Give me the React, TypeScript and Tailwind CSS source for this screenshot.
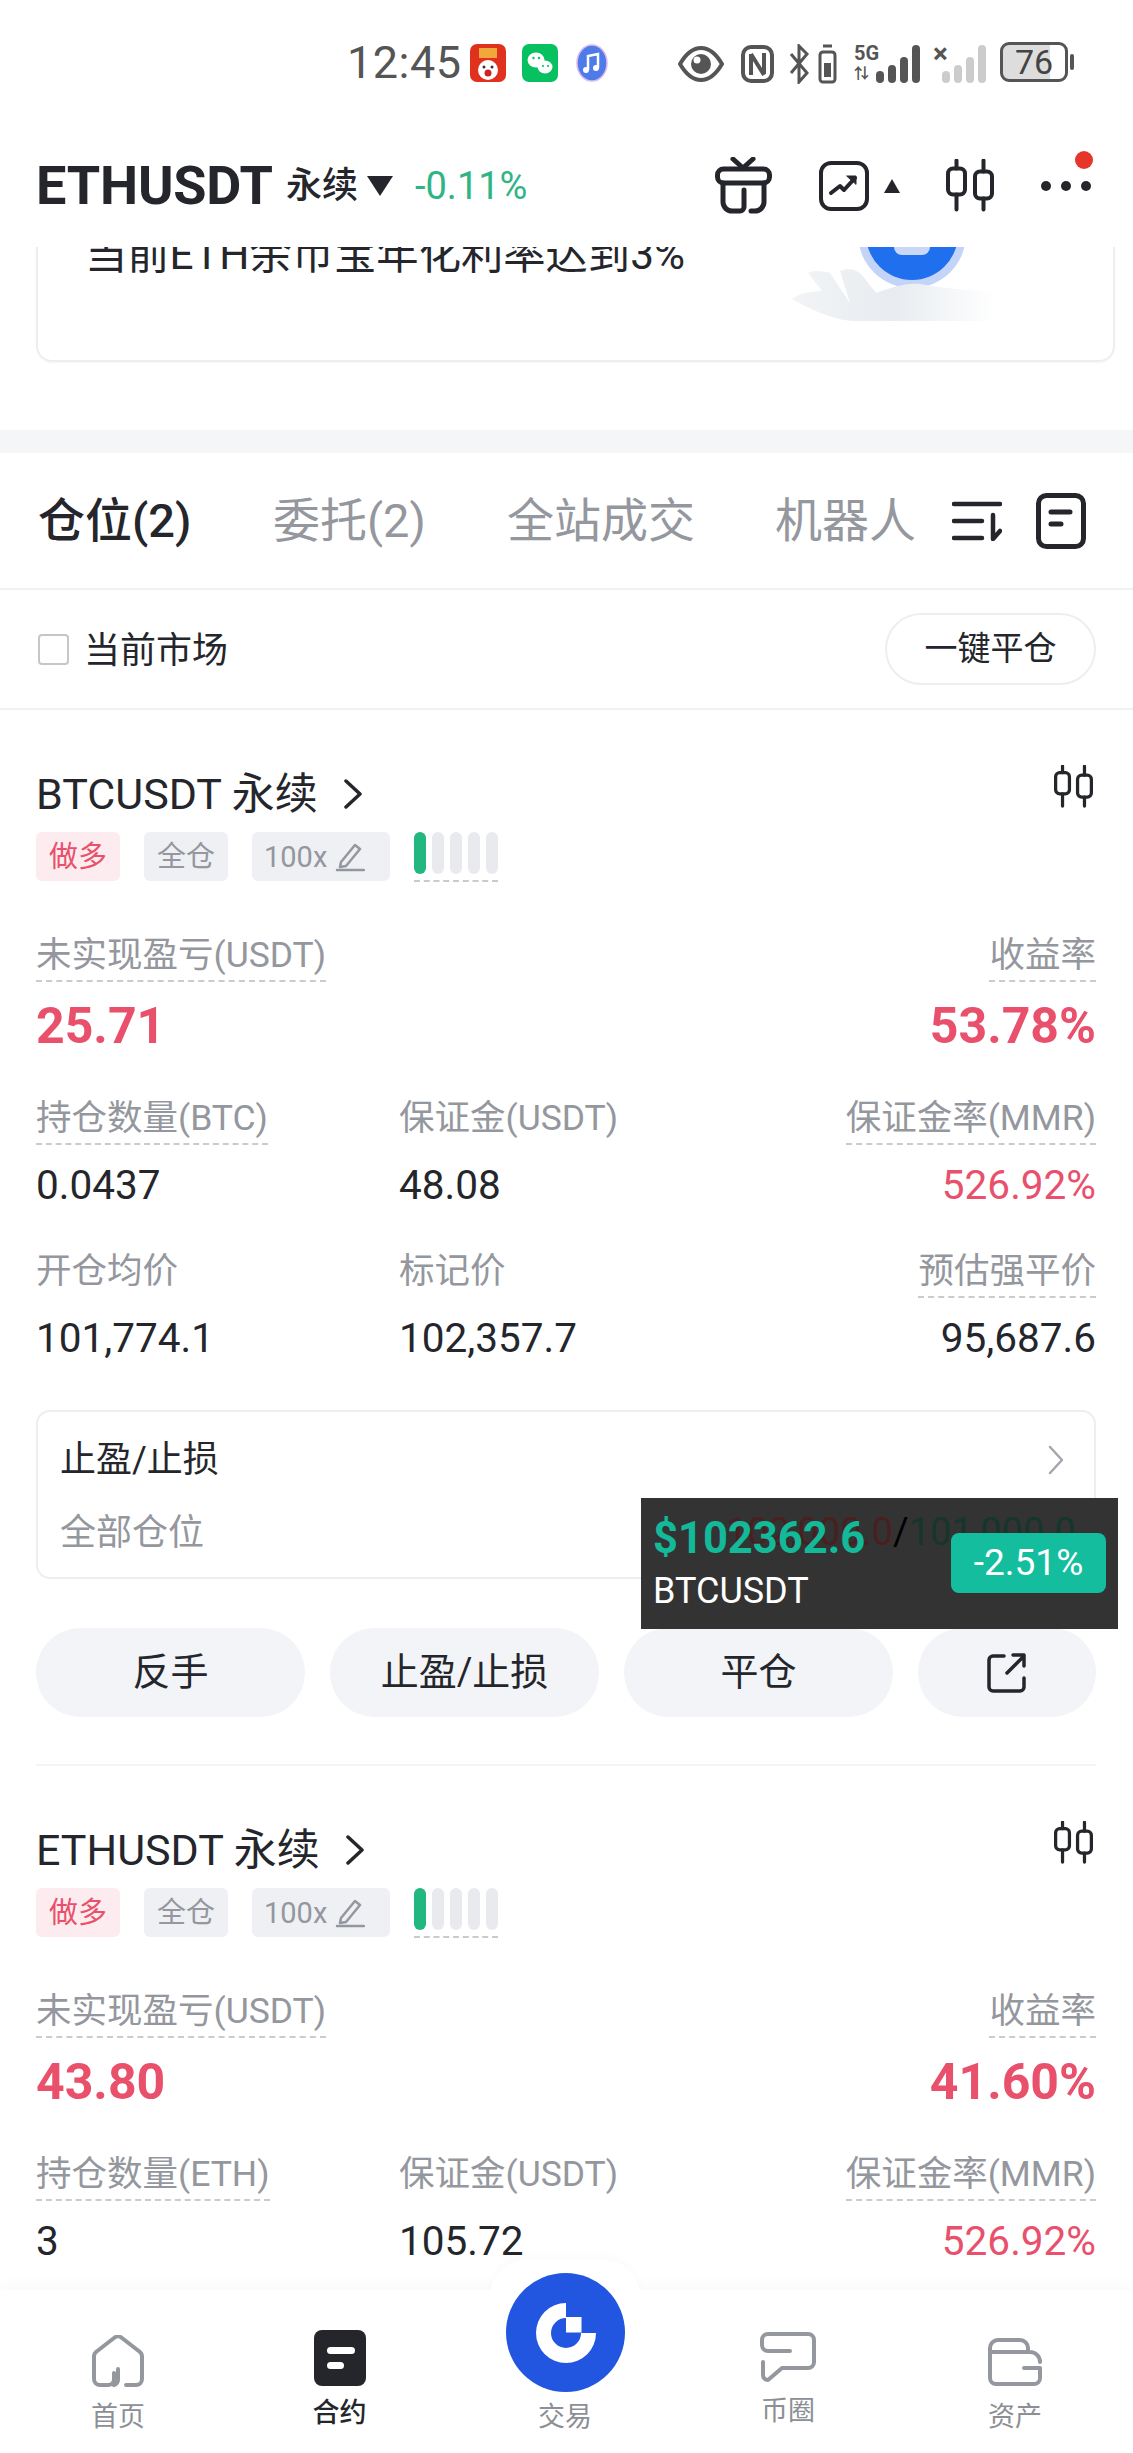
import React from 'react';

const FONT = "font-['Roboto','Noto_Sans_CJK_SC',sans-serif]";
const INK = '#24262c';

function CandleIcon({ className }: { className: string }) {
  return (
    <svg viewBox="0 0 48 52" fill="none" stroke={INK} strokeWidth="4" strokeLinecap="round" className={className}>
      <rect x="2" y="9" width="17" height="26" rx="5" />
      <rect x="29" y="12" width="17" height="27" rx="5" />
      <path d="M10.5 1v8M10.5 35v15M37.5 1v11M37.5 39v11" />
    </svg>
  );
}

function StatusBar() {
  return (
    <div className="h-[124px] flex items-start pt-[42px] pl-[347px] shrink-0 text-[#555]">
      <span className="text-[45px] leading-[42px] w-[123px] tracking-[0.5px] font-['Roboto']">12:45</span>
      <div className="w-[36px] h-[38px] rounded-[7px] bg-[#e0301e] flex items-center justify-center mt-[2px]">
        <svg viewBox="0 0 36 38" className="w-[36px] h-[38px]">
          <path d="M9 4h18v10H9z" fill="#f6c544" opacity="0.8" />
          <circle cx="18" cy="26" r="10" fill="#fff" />
          <circle cx="18" cy="29" r="3.5" fill="#c22" />
          <circle cx="14" cy="23" r="1.5" fill="#333" />
          <circle cx="22" cy="23" r="1.5" fill="#333" />
        </svg>
      </div>
      <div className="ml-[16px] w-[36px] h-[38px] rounded-[7px] bg-[#07c160] flex items-center justify-center mt-[2px]">
        <svg viewBox="0 0 36 38" className="w-[36px] h-[38px]">
          <ellipse cx="14" cy="16" rx="8.5" ry="7.5" fill="#fff" />
          <ellipse cx="23" cy="23" rx="7.5" ry="6.5" fill="#fff" />
          <circle cx="11.5" cy="14" r="1.2" fill="#07c160" />
          <circle cx="17" cy="14" r="1.2" fill="#07c160" />
          <circle cx="21" cy="22" r="1.1" fill="#07c160" />
          <circle cx="26" cy="22" r="1.1" fill="#07c160" />
        </svg>
      </div>
      <svg viewBox="0 0 32 38" className="ml-[18px] w-[32px] h-[38px] mt-[2px]">
        <ellipse cx="16" cy="19" rx="15" ry="18" fill="#4f7be8" stroke="#d9b8f0" strokeWidth="1.5" />
        <path d="M12 26V12l10-2v14" fill="none" stroke="#fff" strokeWidth="2.5" />
        <circle cx="10" cy="26" r="3" fill="#fff" />
        <circle cx="20" cy="24" r="3" fill="#fff" />
      </svg>
      <svg viewBox="0 0 46 36" className="ml-[70px] w-[46px] h-[36px] mt-[4px]" fill="none">
        <path d="M2 18C9 6 16 2 23 2s14 4 21 16c-7 12-14 16-21 16S9 30 2 18z" stroke="#555" strokeWidth="4" />
        <circle cx="23" cy="18" r="10" fill="#555" />
        <circle cx="19" cy="14" r="3.5" fill="#fff" />
      </svg>
      <svg viewBox="0 0 33 38" className="ml-[17px] w-[33px] h-[38px] mt-[3px]" fill="none" stroke="#555">
        <rect x="2" y="2" width="29" height="34" rx="8" strokeWidth="4" />
        <path d="M10 30V9M23 8v21M10 9l13 21" strokeWidth="4" />
      </svg>
      <svg viewBox="0 0 50 40" className="ml-[14px] w-[50px] h-[40px] mt-[2px]" fill="none" stroke="#555">
        <path d="M3 10l16 19-8 9V2l8 8L3 29" strokeWidth="3" />
        <rect x="32" y="8" width="15" height="30" rx="3" strokeWidth="3" />
        <path d="M35 2h9" strokeWidth="3" />
        <rect x="36" y="19" width="7" height="14" fill="#555" stroke="none" />
      </svg>
      <div className="ml-[16px] w-[22px] flex flex-col items-start text-[#555] font-bold mt-[1px]">
        <span className="text-[20px] leading-[20px] font-['Roboto']">5G</span>
        <span className="text-[15px] leading-[18px] mt-[2px]">⇅</span>
      </div>
      <div className="flex items-end gap-[4px] h-[38px] mt-[3px]">
        <span className="w-[8px] h-[12px] rounded-full bg-[#555]" />
        <span className="w-[8px] h-[18px] rounded-full bg-[#555]" />
        <span className="w-[8px] h-[26px] rounded-full bg-[#555]" />
        <span className="w-[8px] h-[38px] rounded-full bg-[#555]" />
      </div>
      <div className="ml-[13px] w-[16px] text-[#555] font-bold text-[28px] leading-[24px]">×</div>
      <div className="-ml-[7px] flex items-end gap-[4px] h-[38px] mt-[3px]">
        <span className="w-[8px] h-[12px] rounded-full bg-[#ccc]" />
        <span className="w-[8px] h-[18px] rounded-full bg-[#ccc]" />
        <span className="w-[8px] h-[26px] rounded-full bg-[#ccc]" />
        <span className="w-[8px] h-[38px] rounded-full bg-[#ccc]" />
      </div>
      <div className="ml-[14px] w-[68px] h-[40px] rounded-[9px] border-[3px] border-[#555] bg-[linear-gradient(90deg,#ddd_0,#ddd_76%,#fff_76%)] text-[#444] text-[34px] leading-[34px] text-center font-['Roboto']">
        76
      </div>
      <span className="ml-[2px] mt-[12px] w-[4px] h-[16px] rounded-full bg-[#555]" />
    </div>
  );
}

function Header() {
  return (
    <div className="h-[123px] flex items-center pl-[36px] shrink-0 relative">
      <span className="text-[54px] leading-[60px] font-bold text-[#24262c] tracking-[-0.2px] w-[238px] whitespace-nowrap">ETHUSDT</span>
      <span className="ml-[12px] text-[36px] font-medium text-[#24262c] leading-[60px]">永续</span>
      <svg viewBox="0 0 26 20" className="ml-[9px] w-[26px] h-[20px]">
        <path d="M0 0h26L13 20z" fill={INK} />
      </svg>
      <span className="ml-[22px] text-[38px] text-[#2fb585] leading-[60px] w-[115px] whitespace-nowrap">-0.11%</span>
      <svg viewBox="0 0 57 57" fill="none" stroke={INK} strokeWidth="5" strokeLinecap="round" className="ml-[185px] w-[57px] h-[57px]">
        <path d="M18 2l10 9 10-9" />
        <rect x="2.5" y="12" width="52" height="14" rx="6" />
        <path d="M8 26v19a9 9 0 0 0 9 9h8a4 4 0 0 0 4-4V33M49 26v19a9 9 0 0 1-9 9h-4" />
      </svg>
      <svg viewBox="0 0 50 50" fill="none" stroke={INK} strokeLinecap="round" strokeLinejoin="round" className="ml-[47px] w-[50px] h-[50px]">
        <rect x="2" y="2" width="46" height="46" rx="10" strokeWidth="4" />
        <path d="M12 32l9-7 4 4 11-12" strokeWidth="4" />
        <path d="M28 15h9v8z" fill={INK} strokeWidth="1" />
      </svg>
      <svg viewBox="0 0 16 14" className="ml-[15px] w-[16px] h-[14px]">
        <path d="M8 0l8 14H0z" fill={INK} />
      </svg>
      <CandleIcon className="ml-[46px] w-[48px] h-[53px]" />
      <div className="ml-[47px] flex gap-[10px] relative">
        <span className="w-[10px] h-[10px] rounded-full bg-[#24262c]" />
        <span className="w-[10px] h-[10px] rounded-full bg-[#24262c]" />
        <span className="w-[10px] h-[10px] rounded-full bg-[#24262c]" />
        <span className="absolute -top-[30px] left-[34px] w-[18px] h-[18px] rounded-full bg-[#e6362a]" />
      </div>
    </div>
  );
}

function Banner() {
  return (
    <div className="h-[183px] overflow-hidden px-[36px] pr-[18px] shrink-0">
      <div className="-mt-[20px] h-[135px] rounded-[16px] border-2 border-[#eceef0] flex items-start pl-[47px] shadow-[0_1px_2px_rgba(0,0,0,0.04)]">
        <span className="mt-[1px] text-[42.3px] leading-[50px] text-[#24262c] whitespace-nowrap">当前ETH余币宝年化利率达到3%</span>
        <svg viewBox="0 0 220 100" className="ml-auto mr-[103px] w-[220px] h-[100px] shrink-0">
          <defs>
            <linearGradient id="hand" x1="0" x2="1" y1="0" y2="0">
              <stop offset="0" stopColor="#f2f4f6" />
              <stop offset="0.5" stopColor="#e8ecf0" />
              <stop offset="1" stopColor="#ffffff" />
            </linearGradient>
          </defs>
          <circle cx="122" cy="5" r="54" fill="#c3d4f8" />
          <circle cx="122" cy="5" r="46" fill="#1f6fee" />
          <rect x="104" y="10" width="36" height="16" rx="8" fill="#c9d8f5" />
          <path d="M2 70c6-6 22-8 30-8L18 44c6-3 16-2 22 0l20 30L50 42c8-3 16-2 22 4l14 18c16-6 34-12 50-8 24 4 50 6 70 6v30H62C40 90 20 80 2 70z" fill="url(#hand)" />
        </svg>
      </div>
    </div>
  );
}

function Tabs() {
  return (
    <>
      <div className="h-[23px] bg-[#f5f6f7] shrink-0" />
      <div className="h-[137px] border-b-2 border-[#f1f2f4] flex items-center pl-[38px] shrink-0 text-[47px] leading-[60px] text-[#94979d]">
        <span className="text-[#24262c] font-medium w-[235px]">仓位(2)</span>
        <span className="w-[234px]">委托(2)</span>
        <span className="w-[268px]">全站成交</span>
        <span className="w-[139px] h-[60px] overflow-hidden whitespace-nowrap">机器人</span>
        <svg viewBox="0 0 50 40" fill="none" stroke={INK} strokeWidth="4.5" strokeLinecap="round" strokeLinejoin="round" className="ml-[38px] w-[50px] h-[40px]">
          <path d="M2 3h46M2 20h28M2 37h28M41 14v24l7-8" />
        </svg>
        <svg viewBox="0 0 50 56" fill="none" stroke={INK} strokeLinecap="round" className="ml-[34px] w-[50px] h-[56px]">
          <rect x="2.5" y="2.5" width="45" height="51" rx="8" strokeWidth="5" />
          <path d="M15 19h19M15 31h10" strokeWidth="5" />
        </svg>
      </div>
      <div className="h-[120px] border-b-2 border-[#f1f2f4] flex items-center pl-[38px] pr-[37px] shrink-0">
        <span className="w-[31px] h-[31px] rounded-[4px] border-2 border-[#c4c6ca]" />
        <span className="ml-[15px] mt-[3px] text-[36px] text-[#24262c]">当前市场</span>
        <button className="ml-auto w-[211px] h-[72px] rounded-full border-2 border-[#eceef0] text-[33px] text-[#24262c]">
          一键平仓
        </button>
      </div>
    </>
  );
}

function Label({ children, dashed = true }: { children: React.ReactNode; dashed?: boolean }) {
  return (
    <span className={dashed ? 'inline-block h-[50px] text-[35.5px] leading-[46px] text-[#94979d] border-b-2 border-dashed border-[#c9cbcf]' : 'inline-block h-[50px] text-[35.5px] leading-[46px] text-[#94979d]'}>
      {children}
    </span>
  );
}

type Pos = {
  symbol: string;
  pnl: string;
  rate: string;
  sizeLabel: string;
  size: string;
  margin: string;
  entry: string;
  mark: string;
  liq: string;
};

function PositionCard({ p }: { p: Pos }) {
  return (
    <div className="pt-[54px] pb-[47px] border-b-2 border-[#f3f4f5]">
      <div className="h-[60px] flex items-center text-[43px] text-[#24262c] relative">
        <span>{p.symbol} 永续</span>
        <svg viewBox="0 0 20 30" fill="none" stroke={INK} strokeWidth="3.5" strokeLinecap="round" strokeLinejoin="round" className="ml-[25px] w-[20px] h-[30px]">
          <path d="M3 2l14 13L3 28" />
        </svg>
        <CandleIcon className="ml-auto mr-[3px] -mt-[16px] w-[39px] h-[43px]" />
      </div>
      <div className="mt-[8px] flex items-start h-[50px] text-[29px] leading-[50px]">
        <span className="w-[84px] h-[49px] rounded-[6px] bg-[#fdecef] text-[#e8506b] text-center">做多</span>
        <span className="ml-[24px] w-[84px] h-[49px] rounded-[6px] bg-[#eef0f4] text-[#94979d] text-center">全仓</span>
        <span className="ml-[24px] w-[138px] h-[49px] rounded-[6px] bg-[#eef0f4] text-[#94979d] flex items-center pl-[12px]">
          100x
          <svg viewBox="0 0 30 30" fill="none" stroke="#94979d" strokeWidth="2.5" strokeLinecap="round" strokeLinejoin="round" className="ml-[8px] w-[30px] h-[30px]">
            <path d="M6 20L20 3l5 4-14 17-6 1zM2 28h27" />
          </svg>
        </span>
        <div className="ml-[24px] w-[84px] h-[50px] flex items-start justify-between border-b-2 border-dashed border-[#c9cbcf]">
          <span className="w-[12px] h-[42px] rounded-full bg-[#22b77f]" />
          <span className="w-[12px] h-[42px] rounded-full bg-[#e8eaee]" />
          <span className="w-[12px] h-[42px] rounded-full bg-[#e8eaee]" />
          <span className="w-[12px] h-[42px] rounded-full bg-[#e8eaee]" />
          <span className="w-[12px] h-[42px] rounded-full bg-[#e8eaee]" />
        </div>
      </div>
      <div className="mt-[50px] flex justify-between">
        <Label>未实现盈亏(USDT)</Label>
        <Label>收益率</Label>
      </div>
      <div className="mt-[14px] flex justify-between text-[50px] leading-[60px] font-bold text-[#e8506b]">
        <span>{p.pnl}</span>
        <span>{p.rate}</span>
      </div>
      <div className="mt-[39px] flex">
        <div className="w-[363px]">
          <Label>{p.sizeLabel}</Label>
          <div className="mt-[15px] text-[40.5px] leading-[50px] text-[#24262c]">{p.size}</div>
        </div>
        <div>
          <Label dashed={false}>保证金(USDT)</Label>
          <div className="mt-[15px] text-[40.5px] leading-[50px] text-[#24262c]">{p.margin}</div>
        </div>
        <div className="ml-auto text-right">
          <Label>保证金率(MMR)</Label>
          <div className="mt-[15px] text-[40.5px] leading-[50px] text-[#e8506b]">526.92%</div>
        </div>
      </div>
      <div className="mt-[38px] flex">
        <div className="w-[363px]">
          <Label dashed={false}>开仓均价</Label>
          <div className="mt-[15px] text-[40.5px] leading-[50px] text-[#24262c]">{p.entry}</div>
        </div>
        <div>
          <Label dashed={false}>标记价</Label>
          <div className="mt-[15px] text-[40.5px] leading-[50px] text-[#24262c]">{p.mark}</div>
        </div>
        <div className="ml-auto text-right">
          <Label>预估强平价</Label>
          <div className="mt-[15px] text-[40.5px] leading-[50px] text-[#24262c]">{p.liq}</div>
        </div>
      </div>
      <div className="mt-[47px] h-[169px] rounded-[14px] border-2 border-[#eceef0] pl-[22px] pr-[30px] pt-[23px]">
        <div className="flex items-center h-[50px] text-[36px] text-[#24262c]">
          止盈/止损
          <svg viewBox="0 0 16 30" fill="none" stroke="#a4a7ad" strokeWidth="2.5" strokeLinecap="round" strokeLinejoin="round" className="ml-auto w-[16px] h-[30px]">
            <path d="M2 2l12 13L2 28" />
          </svg>
        </div>
        <div className="mt-[23px] text-[36px] leading-[50px] text-[#94979d]">全部仓位</div>
      </div>
      <div className="mt-[49px] flex gap-[25px] text-[38px] text-[#24262c]">
        <button className="w-[269px] h-[89px] rounded-full bg-[#f2f4f7]">反手</button>
        <button className="w-[269px] h-[89px] rounded-full bg-[#f2f4f7]">止盈/止损</button>
        <button className="w-[269px] h-[89px] rounded-full bg-[#f2f4f7]">平仓</button>
        <button className="w-[178px] h-[89px] rounded-full bg-[#f2f4f7] flex items-center justify-center">
          <svg viewBox="0 0 40 40" fill="none" stroke={INK} strokeWidth="3.5" strokeLinecap="round" strokeLinejoin="round" className="w-[40px] h-[40px]">
            <path d="M17 3H6a4 4 0 0 0-4 4v27a4 4 0 0 0 4 4h27a4 4 0 0 0 4-4v-9M20 20L37 3M26 2h11v11" />
          </svg>
        </button>
      </div>
    </div>
  );
}

function PriceOverlay() {
  return (
    <div className="absolute left-[641px] top-[1498px] w-[477px] h-[131px] bg-[#333333] pl-[12px] pt-[11px] overflow-hidden">
      <span className="absolute left-[85px] top-[9px] text-[38px] leading-[50px] whitespace-nowrap text-black">
        <span className="text-[#4a1f20]">102,000.0</span>/<span className="text-[#16352c]">101,000.0</span>
      </span>
      <div className="relative h-[60px] text-[43.5px] leading-[60px] font-bold text-[#13b999]">$102362.6</div>
      <div className="relative -mt-[3px] text-[36px] leading-[50px] text-white">BTCUSDT</div>
      <div className="absolute left-[310px] top-[35px] w-[155px] h-[60px] rounded-[8px] bg-[#13bd9e] text-white text-[37px] leading-[60px] text-center">
        -2.51%
      </div>
    </div>
  );
}

function BottomNav() {
  return (
    <div className="h-[163px] shrink-0 relative bg-white shadow-[0_-6px_14px_rgba(0,0,0,0.025)] grid grid-cols-[236px_204px_250px_196px_247px] text-[27px] text-[#8c8f95]">
      <div className="absolute left-[490px] -top-[30px] w-[150px] h-[36px] bg-white rounded-t-[75px] shadow-[0_-4px_10px_rgba(0,0,0,0.02)]" />
      <div className="flex flex-col items-center pt-[45px]">
        <svg viewBox="0 0 52 52" fill="none" stroke="#94979d" strokeWidth="4" strokeLinecap="round" strokeLinejoin="round" className="w-[52px] h-[52px]">
          <path d="M22 38v6a6 6 0 0 1-6 6H8a6 6 0 0 1-6-6V21a6 6 0 0 1 2-4L22 3a6 6 0 0 1 8 0l18 14a6 6 0 0 1 2 4v23a6 6 0 0 1-6 6h-10M26 34v10a6 6 0 0 1-4 6" />
        </svg>
        <span className="mt-[12px] leading-[36px]">首页</span>
      </div>
      <div className="flex flex-col items-center pt-[40px] pl-[3px]">
        <div className="w-[52px] h-[56px] rounded-[8px] bg-[#24262c] flex flex-col items-center justify-center gap-[8px] pl-[2px]">
          <span className="w-[28px] h-[7px] rounded-full bg-white" />
          <span className="w-[17px] h-[7px] rounded-full bg-white -ml-[11px]" />
        </div>
        <span className="mt-[9px] leading-[36px] text-[#24262c] font-medium">合约</span>
      </div>
      <div className="flex flex-col items-center pt-[109px] relative z-10">
        <div className="absolute left-[66px] -top-[17px] w-[119px] h-[119px] rounded-full bg-[#2256e0] flex items-center justify-center">
          <svg viewBox="0 0 60 60" className="w-[60px] h-[60px]">
            <path d="M30 0v15a15 15 0 1 0 15 15h15A30 30 0 1 1 30 0z" fill="#fff" />
            <rect x="30" y="14" width="15.5" height="15.5" fill="#fff" />
          </svg>
        </div>
        <span className="leading-[36px]">交易</span>
      </div>
      <div className="flex flex-col items-center pt-[42px]">
        <svg viewBox="0 0 56 50" fill="none" stroke="#94979d" strokeWidth="4" strokeLinecap="round" strokeLinejoin="round" className="w-[56px] h-[50px]">
          <path d="M30 19H8a6 6 0 0 1-6-6V8a6 6 0 0 1 6-6h40a6 6 0 0 1 6 6v22a6 6 0 0 1-6 6H22L8 48c-3 0-5-2-5-5V30" />
        </svg>
        <span className="mt-[11px] leading-[36px]">币圈</span>
      </div>
      <div className="flex flex-col items-center pt-[48px] pl-[11px]">
        <svg viewBox="0 0 54 48" fill="none" stroke="#94979d" strokeWidth="4" strokeLinecap="round" strokeLinejoin="round" className="w-[54px] h-[48px]">
          <path d="M2 14h40a10 10 0 0 1 10 10M40 14V10a8 8 0 0 0-8-8H10a8 8 0 0 0-8 8v30a6 6 0 0 0 6 6h38a6 6 0 0 0 6-6V30H36" />
        </svg>
        <span className="mt-[13px] leading-[36px]">资产</span>
      </div>
    </div>
  );
}

const positions: Pos[] = [
  { symbol: 'BTCUSDT', pnl: '25.71', rate: '53.78%', sizeLabel: '持仓数量(BTC)', size: '0.0437', margin: '48.08', entry: '101,774.1', mark: '102,357.7', liq: '95,687.6' },
  { symbol: 'ETHUSDT', pnl: '43.80', rate: '41.60%', sizeLabel: '持仓数量(ETH)', size: '3', margin: '105.72', entry: '3,215.4', mark: '3,262.9', liq: '2,150.3' },
];

export default function App() {
  return (
    <div className={`${FONT} relative w-[1133px] h-[2453px] bg-white overflow-hidden flex flex-col`}>
      <StatusBar />
      <Header />
      <Banner />
      <Tabs />
      <div className="flex-1 overflow-hidden px-[36px] pr-[37px]">
        {positions.map((p) => (
          <PositionCard key={p.symbol} p={p} />
        ))}
      </div>
      <BottomNav />
      <PriceOverlay />
    </div>
  );
}
